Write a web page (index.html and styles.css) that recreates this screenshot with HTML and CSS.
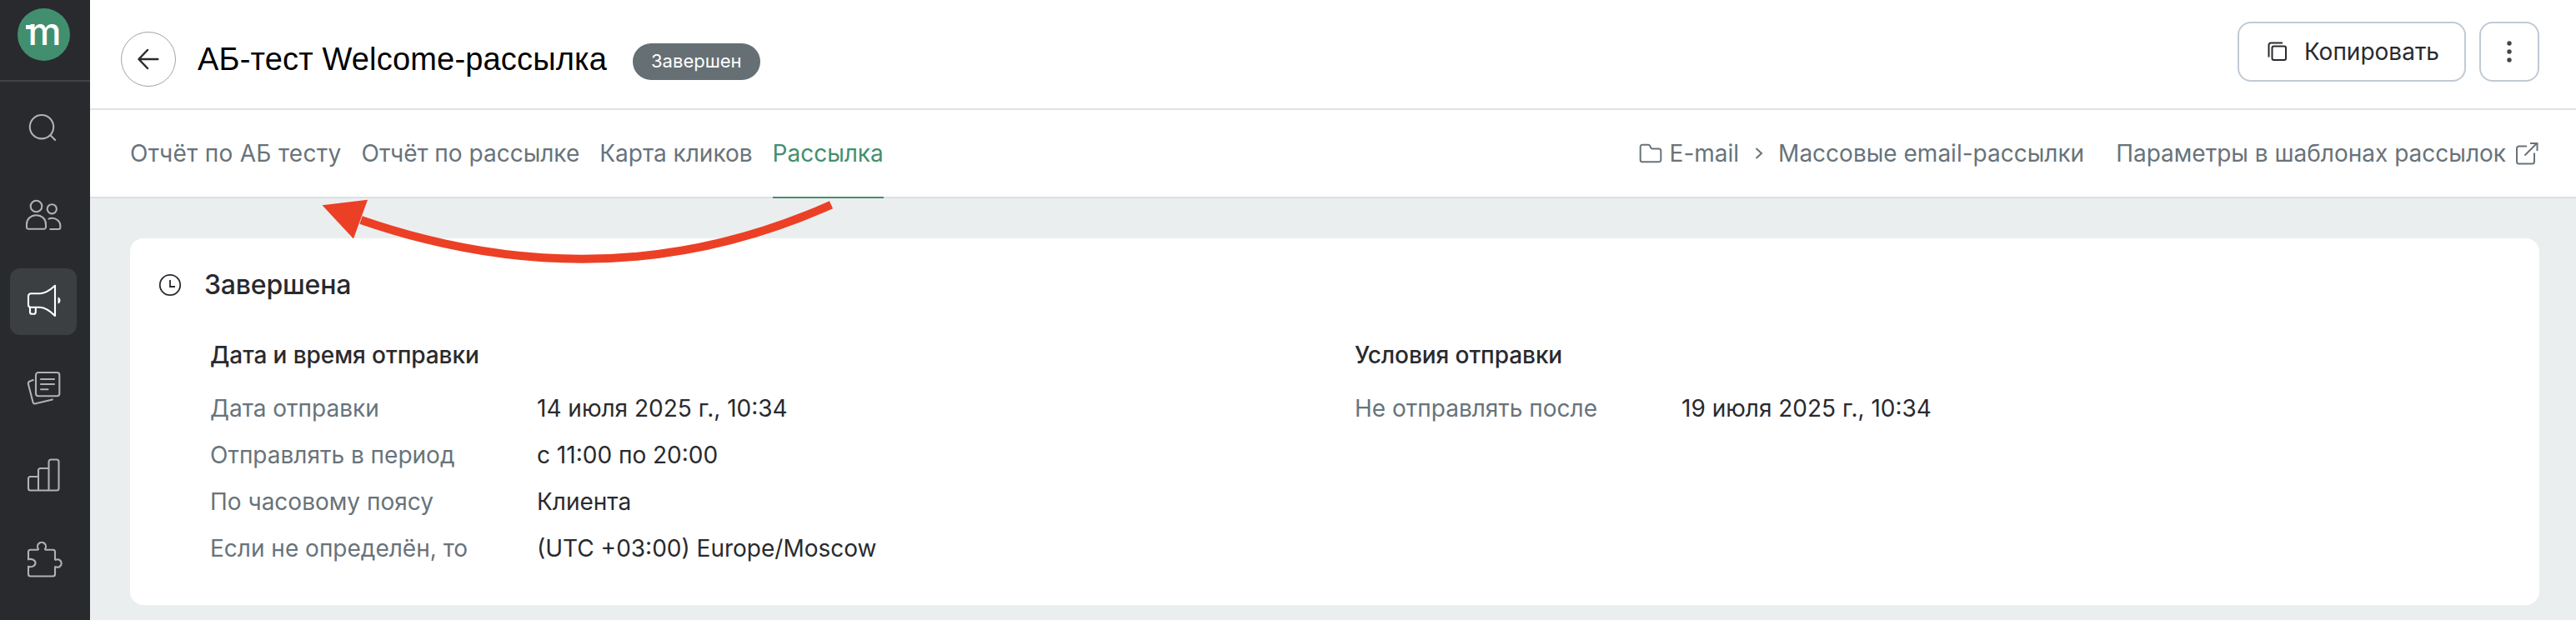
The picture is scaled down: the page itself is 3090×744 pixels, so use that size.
FILE: index.html
```html
<!DOCTYPE html>
<html lang="ru">
<head>
<meta charset="utf-8">
<title>АБ-тест Welcome-рассылка</title>
<link rel="stylesheet" href="styles.css">
</head>
<body>
<div class="app">
  <aside class="sidebar">
    <div class="brand"><div class="logo"><span class="logo-letter">m</span></div></div>
    <nav class="menu">
      <a class="menu-item"><svg class="menu-icon" viewBox="0 0 48 48"><circle cx="22" cy="22.2" r="14.2"/><path d="M32.6 32.4l5.6 5.6"/></svg></a>
      <a class="menu-item"><svg class="menu-icon" viewBox="0 0 48 48"><circle cx="15.5" cy="13.5" r="6.8"/><circle cx="34.3" cy="16.8" r="5.6"/><path d="M4 36.5V35c0-6 5-10.8 11.500-10.800S27 29 27 35v3.500a2.300 2.300 0 0 1-2.300 2.300H6A2 2 0 0 1 4 38.500zM30.500 28.600c1.200-.6 2.300-.8 3.800-.8 5.800 0 10 4 10 9V39a2 2 0 0 1-2 2h-10"/></svg></a>
      <a class="menu-item menu-item--active"><svg class="menu-icon" viewBox="0 0 48 48"><path d="M6 17.300a3 3 0 0 1 3-3h11c7-.2 12.500-4.500 18-9.500V41c-5-5-11-10-18-10.300H9a3 3 0 0 1-3-3zM8 31.500v5c0 1.500 1 2.300 2.300 2.300h2.200c1.300 0 2.300-.8 2.300-2.300v-5"/><path class="solid" d="M41.500 18.500a4.200 4.200 0 0 1 0 8z"/></svg></a>
      <a class="menu-item"><svg class="menu-icon" viewBox="0 0 48 48"><rect x="15" y="5" width="28.300" height="28.300" rx="3"/><path d="M21 13h16M21 19h16M21 25.200h8.500M11.800 14l-3.500 1.200c-2 .6-2.800 2-2.300 4l5.500 21.300c.4 1.700 1.700 2.200 3.300 1.800l20-4.900"/></svg></a>
      <a class="menu-item"><svg class="menu-icon" viewBox="0 0 48 48"><path d="M8.500 42.500h31.500a2.500 2.500 0 0 0 2.500-2.500V8a2.500 2.500 0 0 0-2.500-2.500h-7A2.500 2.500 0 0 0 30.500 8v34.500M18 42.500v-24a2.500 2.500 0 0 1 2.500-2.500h10M18 26H8.500A2.500 2.500 0 0 0 6 28.500V40a2.500 2.500 0 0 0 2.500 2.500"/></svg></a>
      <a class="menu-item"><svg class="menu-icon" viewBox="0 0 48 48"><path d="M8.500 9.700h8.800c.5-.1.700-.4.700-.9a5 5 0 1 1 8 0c0 .5.200.8.700.9h8.800A2.500 2.500 0 0 1 38 12.200v9c.1.500.4.700.9.600a4.700 4.700 0 1 1 0 8.400c-.5-.1-.8.100-.9.600V39a2.500 2.500 0 0 1-2.500 2.500h-27A2.500 2.500 0 0 1 6 39v-9.200c3 1.200 8.500-.3 8.500-4.300S9 20 6 21.400v-9.200a2.500 2.500 0 0 1 2.500-2.500z"/></svg></a>
    </nav>
  </aside>
  <main class="page">
    <header class="header">
      <a class="back"><svg class="back-icon" viewBox="0 0 32 32"><path d="M27.300 16H4.800M15 5L4.500 16 15 27"/></svg></a>
      <h1 class="title">АБ-тест Welcome-рассылка</h1>
      <span class="badge">Завершен</span>
      <div class="actions">
        <button class="button"><svg class="copy-icon" viewBox="0 0 24 24"><rect x="5.500" y="5.500" width="16.500" height="16.500" rx="2"/><path d="M1.500 18.500V4a2.500 2.500 0 0 1 2.500-2.500h14"/></svg>Копировать</button>
        <button class="button button--more"><svg class="more-icon" viewBox="0 0 24 24"><circle cx="12" cy="2" r="2.700"/><circle cx="12" cy="12" r="2.700"/><circle cx="12" cy="22" r="2.700"/></svg></button>
      </div>
    </header>
    <div class="subheader">
      <nav class="tabs">
        <a class="tab tab--wide">Отчёт по АБ тесту</a>
        <a class="tab">Отчёт по рассылке</a>
        <a class="tab">Карта кликов</a>
        <a class="tab tab--active">Рассылка</a>
      </nav>
      <div class="links">
        <svg class="folder-icon" viewBox="0 0 28 24"><path d="M4 1.700h7.300c1 0 1.500.4 1.900 1.200l1 2.500c.3.800.9 1.200 1.700 1.200H24A2.300 2.300 0 0 1 26.300 9v11A2.300 2.300 0 0 1 24 22.300H4A2.300 2.300 0 0 1 1.700 20V4A2.300 2.300 0 0 1 4 1.700z"/></svg>
        <a class="crumb">E-mail</a>
        <svg class="chevron-icon" viewBox="0 0 10 14"><path d="M1.500 1L8 7l-6.500 6"/></svg>
        <a class="crumb">Массовые email-рассылки</a>
        <a class="external">Параметры в шаблонах рассылок<svg class="external-icon" viewBox="0 0 28 28"><path d="M14 5.500H4.500A2.500 2.500 0 0 0 2 8v16a2.500 2.500 0 0 0 2.500 2.500h16A2.500 2.500 0 0 0 23 24V13.500M11.500 16.500L26 2M18 2h8.500v9"/></svg></a>
      </div>
    </div>
    <div class="content">
      <section class="card">
        <div class="card-head">
          <svg class="clock-icon" viewBox="0 0 28 28"><circle cx="14" cy="14" r="12.200"/><path d="M14 8v8h6"/></svg>
          <h2 class="card-title">Завершена</h2>
        </div>
        <div class="columns">
          <div class="column">
            <h3 class="column-title">Дата и время отправки</h3>
            <dl class="params">
              <dt>Дата отправки</dt><dd>14 июля 2025 г., 10:34</dd>
              <dt>Отправлять в период</dt><dd>с 11:00 по 20:00</dd>
              <dt>По часовому поясу</dt><dd>Клиента</dd>
              <dt>Если не определён, то</dt><dd>(UTC +03:00) Europe/Moscow</dd>
            </dl>
          </div>
          <div class="column">
            <h3 class="column-title">Условия отправки</h3>
            <dl class="params">
              <dt>Не отправлять после</dt><dd>19 июля 2025 г., 10:34</dd>
            </dl>
          </div>
        </div>
      </section>
    </div>
  </main>
  <svg class="pointer" viewBox="0 0 640 90"><path class="pointer-line" d="M622 15.700Q353 136 58 34"/><path class="pointer-head" d="M11.500 16.300L66 9.700 49 56.500z"/></svg>
</div>
</body>
</html>
```
FILE: styles.css
```css
* { box-sizing: border-box; }
body {
  margin: 0;
  background: #ebeeef;
  color: #292a2e;
  font: 28px/40px Inter, "Noto Sans", sans-serif;
}
h1, h2, h3, dl, dd { margin: 0; font-weight: 400; }
svg { display: block; flex: none; fill: none; stroke: currentColor; }
.app { position: relative; display: flex; height: 744px; overflow: hidden; }

.sidebar { width: 108px; flex: none; background: #292a2e; color: #b0b1b2; }
.brand { height: 98px; padding: 10px 0 0 20.500px; border-bottom: 2px solid #404347; }
.logo {
  position: relative;
  display: flex;
  justify-content: center;
  width: 63px;
  height: 63px;
  border-radius: 50%;
  background: #428f6f;
  color: #fff;
}
.logo::before {
  content: "";
  position: absolute;
  left: 10px;
  top: 20px;
  width: 7px;
  height: 5px;
  background: #fff;
}
.logo-letter { font-size: 45px; line-height: 56px; font-weight: 500; padding-left: 3px; }
.menu { display: flex; flex-direction: column; gap: 24px; padding: 16px 0 0 12px; }
.menu-item {
  display: flex;
  align-items: center;
  justify-content: center;
  width: 80px;
  height: 80px;
  border-radius: 12px;
}
.menu-item--active { background: #3c3f42; color: #fff; }
.menu-icon { width: 48px; height: 48px; margin-left: -1px; stroke-width: 2.100; stroke-linecap: round; stroke-linejoin: round; }
.menu-icon .solid { fill: currentColor; stroke: none; }

.page { flex: 1; min-width: 0; }
.header {
  display: flex;
  align-items: center;
  height: 132px;
  padding: 0 44px 0 37px;
  background: #fff;
  border-bottom: 2px solid #dce1e6;
}
.back {
  display: flex;
  align-items: center;
  justify-content: center;
  width: 66px;
  height: 66px;
  margin-top: 12px;
  border: 1.500px solid #a3a3a3;
  border-radius: 50%;
}
.back-icon { width: 32px; height: 32px; stroke-width: 2.500; stroke-linecap: round; stroke-linejoin: round; }
.title {
  margin: 12px 0 0 26px;
  color: #000;
  font: 38px/48px "Liberation Sans", Arial, sans-serif;
  letter-spacing: 0.180px;
}
.badge {
  height: 44px;
  margin: 18px 0 0 31px;
  padding: 0 22px;
  border-radius: 22px;
  background: #667074;
  color: #fff;
  font-size: 22px;
  line-height: 43px;
}
.actions { display: flex; gap: 16px; margin: -6px 0 0 auto; }
.button {
  display: flex;
  align-items: center;
  height: 72px;
  padding: 0 30px 0 34px;
  gap: 20px;
  border: 2px solid #bfcad4;
  border-radius: 16px;
  background: #fff;
  color: inherit;
  font: inherit;
}
.button--more { width: 72px; padding: 0; justify-content: center; }
.copy-icon { width: 24px; height: 24px; stroke-width: 2; }
.more-icon { width: 24px; height: 24px; overflow: visible; fill: #434448; stroke: none; }

.subheader {
  display: flex;
  justify-content: space-between;
  height: 106px;
  padding: 0 45px 0 48px;
  background: #fff;
  border-bottom: 2px solid #dce1e6;
  color: #68737a;
}
.tabs { display: flex; gap: 24px; height: 106px; }
.tab { padding-top: 32px; white-space: nowrap; }
.tab--wide { letter-spacing: 0.300px; }
.tab--active { color: #428f6f; border-bottom: 2px solid #428f6f; }
.links { display: flex; align-items: center; white-space: nowrap; }
.folder-icon { width: 28px; height: 24px; margin-right: 9px; stroke-width: 2; }
.chevron-icon { width: 10px; height: 14px; margin: 0 18px 0 19px; stroke-width: 2; }
.external { display: flex; align-items: center; gap: 11px; margin-left: 38px; }
.external-icon { width: 28px; height: 28px; stroke-width: 2; }

.content { padding: 48px 44px 0 48px; }
.card { height: 440px; padding: 36px 34px 40px; border-radius: 16px; background: #fff; }
.card-head { display: flex; align-items: center; gap: 27px; height: 40px; }
.clock-icon { width: 28px; height: 28px; stroke-width: 1.800; }
.card-title { font-size: 32px; font-weight: 500; letter-spacing: -0.200px; }
.columns { display: grid; grid-template-columns: 1373px 1fr; padding: 44px 0 0 62px; }
.column-title { font-size: 28px; font-weight: 500; letter-spacing: -0.080px; }
.params { display: grid; grid-template-columns: 392px 1fr; margin-top: 16px; line-height: 56px; }
.params dt { color: #68737a; }

/* Annotation arrow drawn over the page */
.pointer { position: absolute; left: 375px; top: 230px; width: 640px; height: 90px; }
.pointer-line { stroke: #eb4025; stroke-width: 10; }
.pointer-head { fill: #eb4025; stroke: none; }
```
